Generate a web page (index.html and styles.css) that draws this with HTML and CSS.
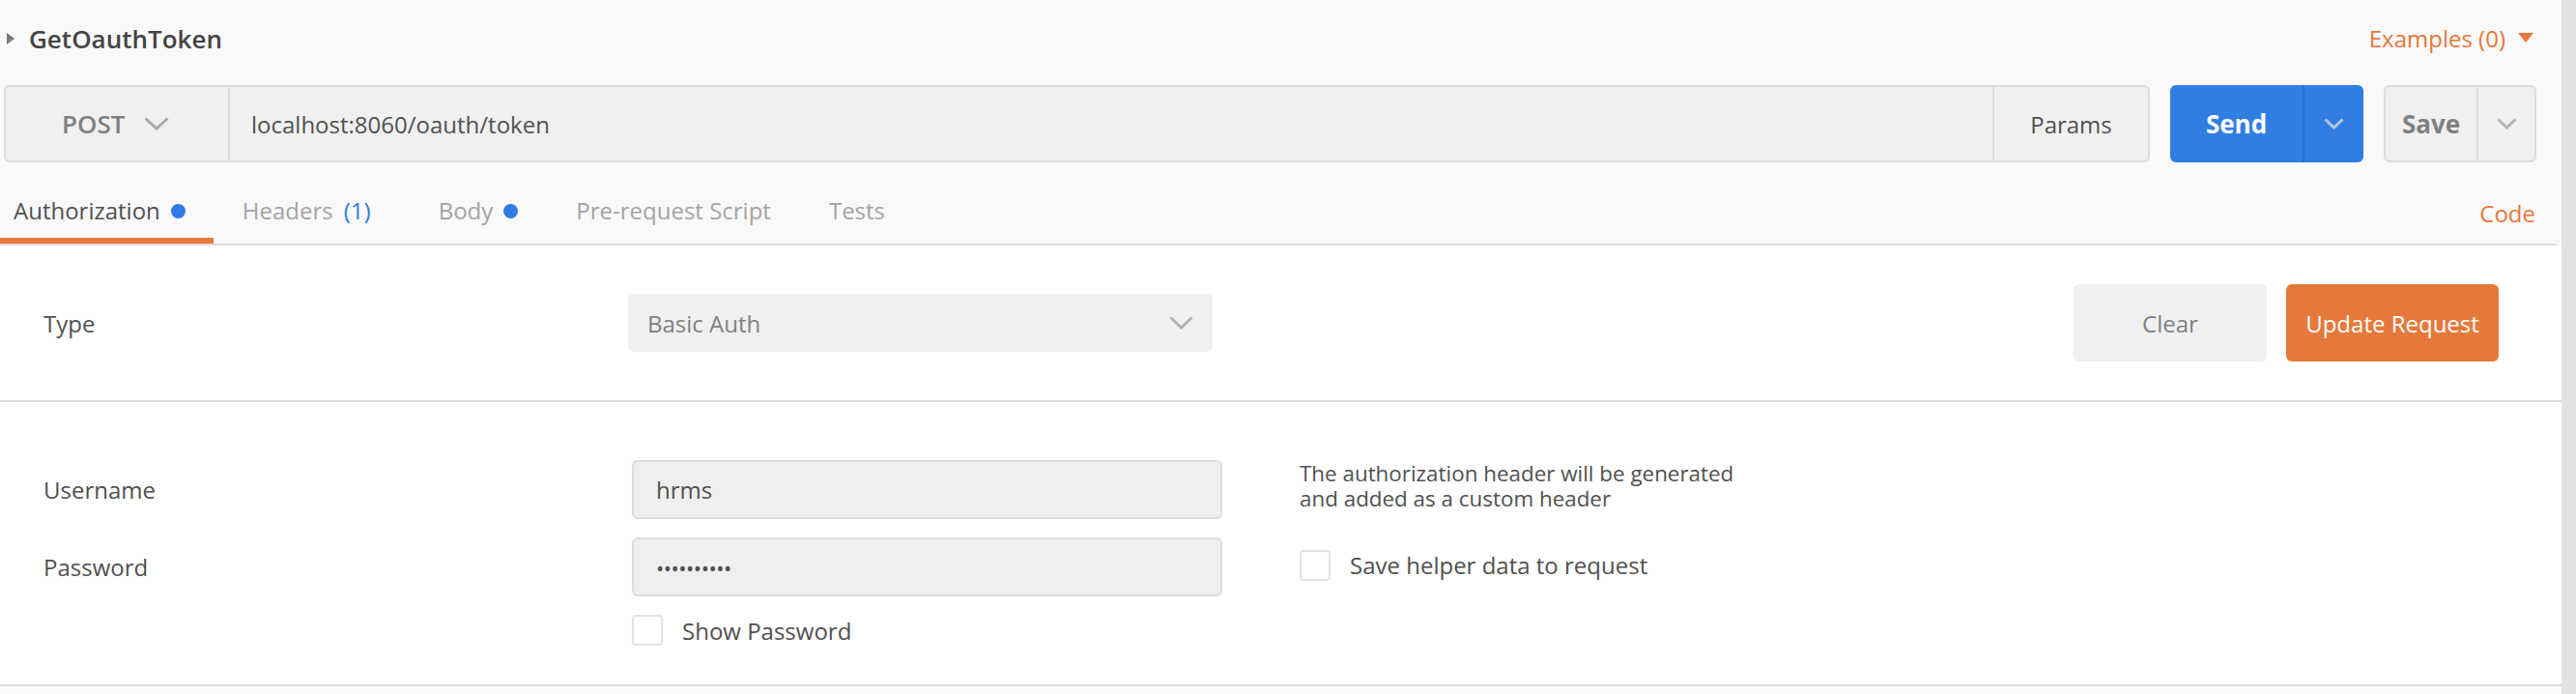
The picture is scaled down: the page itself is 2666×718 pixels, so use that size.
FILE: index.html
```html
<!DOCTYPE html>
<html>
<head>
<meta charset="utf-8">
<link rel="stylesheet" href="styles.css">
</head>
<body>
<div class="app">
  <div class="main">
    <div class="top">
      <div class="title-row">
        <div class="title">
          <svg class="caret" width="10" height="14" viewBox="0 0 10 14"><path d="M1 1 L9 7 L1 13 Z" fill="#7a7a7a"/></svg>
          <span class="title-text">GetOauthToken</span>
        </div>
        <div class="examples">Examples (0)
          <svg class="ex-caret" width="16" height="10" viewBox="0 0 16 10"><path d="M0 0 H16 L8 10 Z" fill="#e6783b"/></svg>
        </div>
      </div>

      <div class="url-row">
        <div class="url-box">
          <div class="method">
            <span class="method-text">POST</span>
            <svg class="chev" width="26" height="14" viewBox="0 0 26 14"><path d="M1.5 1.5 L13 12 L24.5 1.5" fill="none" stroke="#a9a9a9" stroke-width="3"/></svg>
          </div>
          <div class="url-input">localhost:8060/oauth/token</div>
          <div class="params">Params</div>
        </div>
        <div class="send">
          <div class="send-main">Send</div>
          <div class="send-drop">
            <svg width="21" height="12" viewBox="0 0 21 12"><path d="M1.5 1.5 L10.5 10 L19.5 1.5" fill="none" stroke="#b9c6d8" stroke-width="3"/></svg>
          </div>
        </div>
        <div class="save">
          <div class="save-main">Save</div>
          <div class="save-drop">
            <svg width="21" height="12" viewBox="0 0 21 12"><path d="M1.5 1.5 L10.5 10 L19.5 1.5" fill="none" stroke="#b5b5b5" stroke-width="3"/></svg>
          </div>
        </div>
      </div>

      <div class="tabs-row">
        <div class="tab active">Authorization<span class="dot"></span></div>
        <div class="tab">Headers<span class="count">(1)</span></div>
        <div class="tab">Body<span class="dot"></span></div>
        <div class="tab">Pre-request Script</div>
        <div class="tab">Tests</div>
        <div class="code">Code</div>
      </div>
    </div>

    <div class="type-section">
      <div class="label type-label">Type</div>
      <div class="select">
        <span class="select-text">Basic Auth</span>
        <svg width="25" height="14" viewBox="0 0 25 14"><path d="M1.5 1.5 L12.5 12 L23.5 1.5" fill="none" stroke="#b3b3b3" stroke-width="3"/></svg>
      </div>
      <div class="actions">
        <div class="btn btn-clear">Clear</div>
        <div class="btn btn-update">Update Request</div>
      </div>
    </div>

    <div class="auth-section">
      <div class="label">Username</div>
      <div class="input">hrms</div>
      <div class="helper">The authorization header will be generated<br>and added as a custom header</div>

      <div class="label">Password</div>
      <div class="input pwd">••••••••••</div>
      <div class="check-row helper-check"><span class="checkbox"></span><span class="check-label">Save helper data to request</span></div>

      <div class="empty"></div>
      <div class="check-row"><span class="checkbox"></span><span class="check-label">Show Password</span></div>
      <div class="empty"></div>
    </div>
    <div class="bottom"></div>
  </div>
  <div class="scrollbar"></div>
</div>
</body>
</html>
```

FILE: styles.css
```css
* { box-sizing: border-box; }
html, body { margin: 0; padding: 0; }
body {
  font-family: "Open Sans", "DejaVu Sans", sans-serif;
  color: #505050;
  background: #f9f9f9;
  width: 2666px;
  height: 718px;
  overflow: hidden;
}
.app { display: flex; height: 718px; }
.main { width: 2651px; display: flex; flex-direction: column; }
.scrollbar { width: 15px; background: #e2e2e2; }

.top { background: #f9f9f9; }

.title-row {
  height: 80px;
  display: flex;
  align-items: center;
  justify-content: space-between;
  padding: 0 29px 0 6px;
}
.title { display: flex; align-items: center; }
.caret { margin-right: 14px; }
.title-text { font-size: 26px; font-weight: 600; color: #444; }
.examples { font-size: 24px; color: #e6783b; display: flex; align-items: center; padding-bottom: 2px; }
.ex-caret { margin-left: 13px; }

.url-row {
  display: flex;
  height: 80px;
  margin: 8px 26px 0 4px;
}
.url-box {
  flex: 1;
  display: flex;
  background: #f0f0f0;
  border: 2px solid #dcdcdc;
  border-radius: 6px;
}
.method {
  width: 232px;
  border-right: 2px solid #dcdcdc;
  display: flex;
  align-items: center;
  padding-left: 58px;
}
.method-text { font-size: 26px; font-weight: 600; color: #808080; }
.chev { margin-left: 20px; }
.url-input {
  flex: 1;
  display: flex;
  align-items: center;
  padding-left: 22px;
  font-size: 24px;
  color: #505050;
}
.params {
  width: 161px;
  border-left: 2px solid #dcdcdc;
  display: flex;
  align-items: center;
  justify-content: center;
  font-size: 24px;
  color: #505050;
}
.send {
  display: flex;
  margin-left: 21px;
  width: 200px;
  background: #317ee3;
  border-radius: 6px;
}
.send-main {
  width: 139px;
  display: flex;
  align-items: center;
  justify-content: center;
  font-size: 26px;
  font-weight: 700;
  color: #fff;
  border-right: 2px solid #2a6cc6;
}
.send-drop { flex: 1; display: flex; align-items: center; justify-content: center; }
.save {
  display: flex;
  margin-left: 21px;
  width: 158px;
  background: #f0f0f0;
  border: 2px solid #dcdcdc;
  border-radius: 6px;
}
.save-main {
  width: 96px;
  display: flex;
  align-items: center;
  justify-content: center;
  font-size: 26px;
  font-weight: 700;
  color: #808080;
  border-right: 2px solid #dcdcdc;
}
.save-drop { flex: 1; display: flex; align-items: center; justify-content: center; }

.tabs-row {
  height: 86px;
  display: flex;
  align-items: flex-end;
  border-bottom: 2px solid #dcdcdc;
  margin-right: 5px;
}
.tab {
  font-size: 24px;
  line-height: 34px;
  padding: 0 30px 11px;
  border-bottom: 6px solid transparent;
  color: #a3a3a3;
  display: flex;
  align-items: center;
}
.tab:first-child { padding-left: 14px; padding-right: 29px; }
.tab.active { color: #505050; border-bottom-color: #e6783b; }
.dot {
  width: 15px;
  height: 15px;
  border-radius: 50%;
  background: #2f7be5;
  margin-left: 11px;
}
.count { color: #2f7be5; margin: 0 10px 0 11px; }
.code {
  margin-left: auto;
  font-size: 24px;
  line-height: 34px;
  padding: 0 22px 14px 0;
  color: #e6783b;
}

.type-section {
  background: #fff;
  height: 162px;
  display: flex;
  align-items: center;
  border-bottom: 2px solid #dcdcdc;
  padding-left: 45px;
}
.label { font-size: 24px; color: #505050; }
.type-label { width: 605px; }
.select {
  width: 605px;
  height: 60px;
  background: #f0f0f0;
  border-radius: 6px;
  display: flex;
  align-items: center;
  justify-content: space-between;
  padding: 0 20px 0 20px;
}
.select-text { font-size: 24px; color: #808080; }
.actions { margin-left: auto; display: flex; gap: 20px; margin-right: 65px; }
.btn {
  height: 80px;
  border-radius: 6px;
  display: flex;
  align-items: center;
  justify-content: center;
  font-size: 24px;
}
.btn-clear { width: 200px; background: #f0f0f0; color: #808080; }
.btn-update { width: 220px; background: #e5793b; color: #fff; }

.auth-section {
  background: #fff;
  height: 294px;
  border-bottom: 2px solid #dcdcdc;
  display: grid;
  grid-template-columns: 609px 611px 1fr;
  grid-template-rows: 61px 61px 32px;
  row-gap: 19px;
  padding: 60px 0 0 45px;
  align-items: center;
}
.input {
  height: 61px;
  background: #efefef;
  border: 2px solid #dcdcdc;
  border-radius: 6px;
  display: flex;
  align-items: center;
  padding-left: 23px;
  font-size: 24px;
  color: #505050;
}
.pwd { font-size: 22px; letter-spacing: -0.5px; }
.helper {
  align-self: start;
  margin-left: 80px;
  font-size: 22.4px;
  line-height: 26px;
  color: #505050;
  padding-top: 1px;
}
.helper-check { margin-left: 80px; margin-top: -4px; }
.check-row { display: flex; align-items: center; }
.checkbox {
  width: 32px;
  height: 32px;
  border: 2px solid #e2e2e2;
  border-radius: 4px;
  background: #fff;
  margin-right: 20px;
}
.check-label { font-size: 24px; color: #505050; }
.bottom { flex: 1; background: #f9f9f9; }
```
